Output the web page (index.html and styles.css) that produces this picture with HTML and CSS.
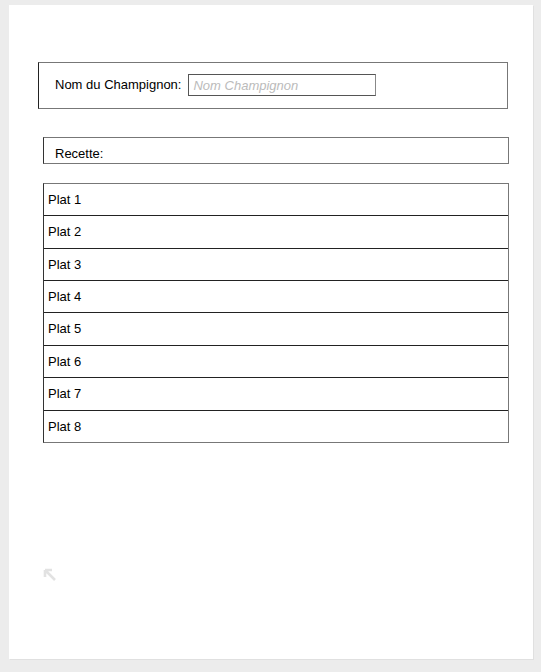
FILE: index.html
```html
<!DOCTYPE html>
<html>
<head>
<meta charset="utf-8">
<link rel="stylesheet" href="styles.css">
</head>
<body>
<div class="page">
  <div class="name-box">
    <label class="name-label" for="nom">Nom du Champignon:</label>
    <input class="name-input" id="nom" type="text" placeholder="Nom Champignon">
  </div>
  <div class="recipe-box">Recette:</div>
  <ul class="dish-list">
    <li class="dish">Plat 1</li>
    <li class="dish">Plat 2</li>
    <li class="dish">Plat 3</li>
    <li class="dish">Plat 4</li>
    <li class="dish">Plat 5</li>
    <li class="dish">Plat 6</li>
    <li class="dish">Plat 7</li>
    <li class="dish">Plat 8</li>
  </ul>
  <div class="corner-icon">
    <svg width="14" height="14" viewBox="0 0 14 14">
      <path d="M2 2 H9 M2 2 V9 M2 2 L12 12" stroke="#e2e2e2" stroke-width="2.6" fill="none"/>
    </svg>
  </div>
</div>
</body>
</html>
```

FILE: styles.css
```css
html, body {
  margin: 0;
  padding: 0;
  background: #ececec;
}
body {
  padding: 5px 7px 12px 9px;
  font-family: "Liberation Sans", Arial, sans-serif;
  font-size: 13px;
  color: #000;
}
.page {
  background: #fff;
  width: 524px;
  height: 654px;
  box-shadow: 1px 1px 0 #e0e0e0;
  padding-top: 57px;
  box-sizing: border-box;
  display: flex;
  flex-direction: column;
}
.name-box {
  margin-left: 29px;
  width: 470px;
  height: 47px;
  box-sizing: border-box;
  border: 1px solid #777;
  border-left-color: #222;
  display: flex;
  align-items: flex-start;
  padding: 11px 0 0 16px;
  gap: 7px;
}
.name-label {
  font-size: 13px;
  line-height: 22px;
}
.name-input {
  width: 188px;
  height: 22px;
  box-sizing: border-box;
  border: 1px solid #555;
  border-right-color: #888;
  margin: 0;
  padding: 0 4px;
  font-family: "Liberation Sans", Arial, sans-serif;
  font-size: 13px;
  outline: none;
}
.name-input::placeholder {
  color: #bbb;
  font-style: italic;
}
.recipe-box {
  margin: 28px 0 0 34px;
  width: 466px;
  height: 27px;
  box-sizing: border-box;
  border: 1px solid #777;
  border-left-color: #333;
  padding: 8px 0 0 11px;
  line-height: 16px;
}
.dish-list {
  list-style: none;
  margin: 19px 0 0 34px;
  padding: 0;
  width: 466px;
  box-sizing: border-box;
  border: 1px solid #777;
  border-left-color: #333;
}
.dish {
  height: 32.4px;
  box-sizing: border-box;
  padding: 8px 0 0 4px;
  line-height: 16px;
  border-top: 1px solid #222;
}
.dish:first-child {
  border-top: none;
  height: 31.2px;
  padding-top: 8px;
}
.corner-icon {
  margin: 125px 0 0 34px;
  width: 14px;
  height: 14px;
}
.corner-icon svg {
  display: block;
}
```
